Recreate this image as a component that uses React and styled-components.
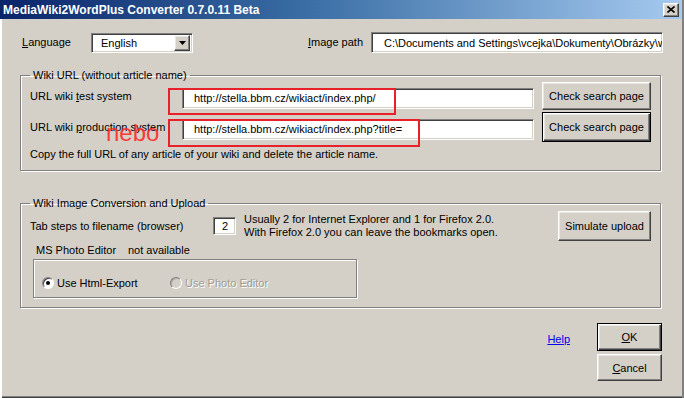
import React from 'react'
import styled, { createGlobalStyle, css } from 'styled-components'

const GlobalStyle = createGlobalStyle`
  html, body {
    margin: 0;
    padding: 0;
    background: #d4d0c8;
  }
  body {
    font-family: "Liberation Sans", Arial, sans-serif;
    font-size: 11px;
    color: #000;
  }
`

const sunken = css`
  box-sizing: border-box;
  background: #fff;
  border: 1px solid;
  border-color: #808080 #fff #fff #808080;
  box-shadow: inset 1px 1px 0 #404040, inset -1px -1px 0 #d4d0c8;
`

const raised = css`
  box-sizing: border-box;
  background: #d4d0c8;
  border: 1px solid;
  border-color: #fff #404040 #404040 #fff;
  box-shadow: inset -1px -1px 0 #808080, inset 1px 1px 0 #e8e6e0;
`

const Window = styled.div`
  width: 684px;
  height: 398px;
  box-sizing: border-box;
  display: flex;
  flex-direction: column;
  background: #d4d0c8;
  box-shadow: inset 2px 0 0 #fff, inset -2px 0 0 #808080, inset 0 -1px 0 #404040, inset 0 -2px 0 #808080;
  overflow: hidden;
`

const TitleBar = styled.div`
  height: 19px;
  margin-right: 2px;
  display: flex;
  align-items: center;
  padding: 0 3px;
  background: linear-gradient(to right, #0a246a 0%, #3a6ea5 45%, #a6caf0 100%);
  color: #fff;
  font-weight: bold;
  font-size: 12px;
`

const TitleText = styled.span`
  flex: 1;
  white-space: nowrap;
`

const CloseButton = styled.div`
  ${raised};
  width: 16px;
  height: 14px;
  display: flex;
  align-items: center;
  justify-content: center;
`

const Body = styled.div`
  flex: 1;
  display: flex;
  flex-direction: column;
  padding: 13px 21px 0 20px;
`

const TopRow = styled.div`
  display: flex;
  align-items: center;
  height: 21px;
  padding-left: 2px;
`

const Label = styled.span`
  width: ${p => p.$w ? `${p.$w}px` : 'auto'};
  flex-shrink: 0;
  white-space: nowrap;
  line-height: 13px;
`

const Key = styled.span`
  text-decoration: underline;
`

const Combo = styled.div`
  ${sunken};
  width: 102px;
  height: 20px;
  display: flex;
  align-items: center;
  padding: 2px 2px 2px 9px;
`

const ComboText = styled.span`
  flex: 1;
`

const ComboArrow = styled.div`
  ${raised};
  width: 16px;
  height: 16px;
  display: flex;
  align-items: center;
  justify-content: center;
`

const Spacer = styled.div`
  flex: 1;
`

const TextBox = styled.div`
  ${sunken};
  width: ${p => p.$w}px;
  height: ${p => p.$h || 21}px;
  flex-shrink: 0;
  display: flex;
  align-items: center;
  justify-content: ${p => p.$right ? 'flex-end' : 'flex-start'};
  padding: 0 ${p => p.$right ? 6 : 4}px 0 ${p => p.$pl ?? 11}px;
  margin-left: ${p => p.$ml || 0}px;
  margin-top: ${p => p.$mt || 0}px;
  white-space: nowrap;
  overflow: hidden;
`

const Caret = styled.span`
  display: inline-block;
  width: 1px;
  height: 12px;
  background: #000;
  margin-left: 1px;
`

const Group = styled.fieldset`
  position: relative;
  margin: ${p => p.$mt}px 0 0 0;
  width: 641px;
  box-sizing: border-box;
  padding: 0 9px ${p => p.$pb}px 9px;
  border: 1px solid #808080;
  box-shadow: 1px 1px 0 #fff, inset 1px 1px 0 #fff;
`

const Legend = styled.legend`
  padding: 0 3px;
  line-height: 13px;
  margin-left: 0;
`

const UrlRow = styled.div`
  display: flex;
  align-items: center;
  height: ${p => p.$h}px;
  margin-top: ${p => p.$mt || 0}px;
`

const Button = styled.div`
  ${raised};
  width: ${p => p.$w}px;
  height: ${p => p.$h}px;
  margin-left: ${p => p.$ml || 0}px;
  flex-shrink: 0;
  display: flex;
  align-items: center;
  justify-content: center;
  white-space: nowrap;
  ${p => p.$default && css`
    border: 1px solid #000;
    box-shadow: inset 1px 1px 0 #fff, inset -1px -1px 0 #404040, inset -2px -2px 0 #808080, inset 2px 2px 0 #e8e6e0;
  `}
`

const Note = styled.div`
  line-height: 13px;
  margin-top: ${p => p.$mt || 0}px;
  white-space: nowrap;
`

const HintBlock = styled.div`
  margin-left: 8px;
  line-height: 13px;
  white-space: nowrap;
`

const InfoRow = styled.div`
  display: flex;
  line-height: 13px;
  margin-top: 3px;
  padding-left: 6px;
`

const OptionBox = styled.div`
  width: 324px;
  height: 39px;
  box-sizing: border-box;
  margin: 2px 0 0 3px;
  padding: 16px 0 0 8px;
  display: flex;
  border: 1px solid #808080;
  box-shadow: inset 1px 1px 0 #fff, 1px 1px 0 #fff;
`

const RadioItem = styled.div`
  width: ${p => p.$w}px;
  display: flex;
  align-items: center;
  height: 13px;
  color: ${p => p.$disabled ? '#a09c94' : '#000'};
  text-shadow: ${p => p.$disabled ? '1px 1px 0 #fff' : 'none'};
`

const RadioDot = styled.span`
  width: 12px;
  height: 12px;
  box-sizing: border-box;
  border-radius: 50%;
  margin-right: 3px;
  border: 1px solid;
  border-color: #808080 #fff #fff #808080;
  background: ${p => p.$disabled ? '#d4d0c8' : '#fff'};
  box-shadow: inset 1px 1px 0 ${p => p.$disabled ? '#b0aca4' : '#404040'};
  display: flex;
  align-items: center;
  justify-content: center;
  &::after {
    content: '';
    width: 4px;
    height: 4px;
    border-radius: 50%;
    background: ${p => p.$checked ? '#000' : 'transparent'};
  }
`

const Footer = styled.div`
  display: flex;
  justify-content: flex-end;
  margin-top: 15px;
  padding-right: 1px;
`

const HelpLink = styled.a`
  color: #0000ee;
  text-decoration: underline;
  line-height: 13px;
  margin: 10px 27px 0 0;
  cursor: pointer;
`

const ButtonStack = styled.div`
  display: flex;
  flex-direction: column;
  gap: 3px;
`

/* red marks drawn over the screenshot */
const Annotation = styled.div`
  position: absolute;
  left: ${p => p.$x}px;
  top: ${p => p.$y}px;
  width: ${p => p.$w}px;
  height: ${p => p.$h}px;
  box-sizing: border-box;
  border: 2px solid #e8202a;
  pointer-events: none;
`

const Nebo = styled.span`
  position: absolute;
  left: 85px;
  top: 39px;
  font-family: "Liberation Sans", Arial, sans-serif;
  font-size: 24px;
  line-height: 1;
  color: #ff2a2a;
  opacity: 0.9;
  pointer-events: none;
`

const CloseIcon = () => (
  <svg width="8" height="7" viewBox="0 0 8 7">
    <path d="M0.5 0.5 L7.5 6.5 M7.5 0.5 L0.5 6.5" stroke="#000" strokeWidth="1.6" />
  </svg>
)

const ArrowIcon = () => (
  <svg width="7" height="4" viewBox="0 0 7 4">
    <path d="M0 0 H7 L3.5 4 Z" fill="#000" />
  </svg>
)

export default function App () {
  return (
    <>
      <GlobalStyle />
      <Window>
        <TitleBar>
          <TitleText>MediaWiki2WordPlus Converter 0.7.0.11 Beta</TitleText>
          <CloseButton><CloseIcon /></CloseButton>
        </TitleBar>
        <Body>
          <TopRow>
            <Label $w={69}><Key>L</Key>anguage</Label>
            <Combo>
              <ComboText>English</ComboText>
              <ComboArrow><ArrowIcon /></ComboArrow>
            </Combo>
            <Spacer />
            <Label><Key>I</Key>mage path</Label>
            <TextBox $w={292} $ml={8} $pl={12}>C:\Documents and Settings\vcejka\Dokumenty\Obrázky\wiki</TextBox>
          </TopRow>

          <Group $mt={16} $pb={9}>
            <Legend>Wiki URL (without article name)</Legend>
            <UrlRow $h={28}>
              <Label $w={152}>URL wiki <Key>t</Key>est system</Label>
              <TextBox $w={352} $mt={4}>http://stella.bbm.cz/wikiact/index.php/</TextBox>
              <Button $w={109} $h={28} $ml={8}>Check search page</Button>
            </UrlRow>
            <UrlRow $h={30} $mt={2}>
              <Label $w={152}>URL wiki <Key>p</Key>roduction system</Label>
              <TextBox $w={352} $mt={4}>http://stella.bbm.cz/wikiact/index.php?title=</TextBox>
              <Button $w={109} $h={30} $ml={8} $default>Check search page</Button>
            </UrlRow>
            <Note $mt={6}>Copy the full URL of any article of your wiki and delete the article name.</Note>
            <Annotation $x={147} $y={6} $w={228} $h={27} />
            <Annotation $x={147} $y={37} $w={252} $h={28} />
            <Nebo>nebo</Nebo>
          </Group>

          <Group $mt={26} $pb={9}>
            <Legend>Wiki Image Conversion and Upload</Legend>
            <UrlRow $h={30} $mt={1}>
              <Label $w={183}>Tab steps to filename (browser)</Label>
              <TextBox $w={23} $h={18} $right>2<Caret /></TextBox>
              <HintBlock>
                Usually 2 for Internet Explorer and 1 for Firefox 2.0.<br />
                With Firefox 2.0 you can leave the bookmarks open.
              </HintBlock>
              <Spacer />
              <Button $w={93} $h={30}>Simulate upload</Button>
            </UrlRow>
            <InfoRow>
              <Label $w={92}>MS Photo Editor</Label>
              <Label>not available</Label>
            </InfoRow>
            <OptionBox>
              <RadioItem $w={128}>
                <RadioDot $checked />
                Use Html-Export
              </RadioItem>
              <RadioItem $w={140} $disabled>
                <RadioDot $disabled />
                Use Photo Editor
              </RadioItem>
            </OptionBox>
          </Group>

          <Footer>
            <HelpLink>Help</HelpLink>
            <ButtonStack>
              <Button $w={65} $h={28} $default><Key>O</Key>K</Button>
              <Button $w={65} $h={27}><Key>C</Key>ancel</Button>
            </ButtonStack>
          </Footer>
        </Body>
      </Window>
    </>
  )
}
